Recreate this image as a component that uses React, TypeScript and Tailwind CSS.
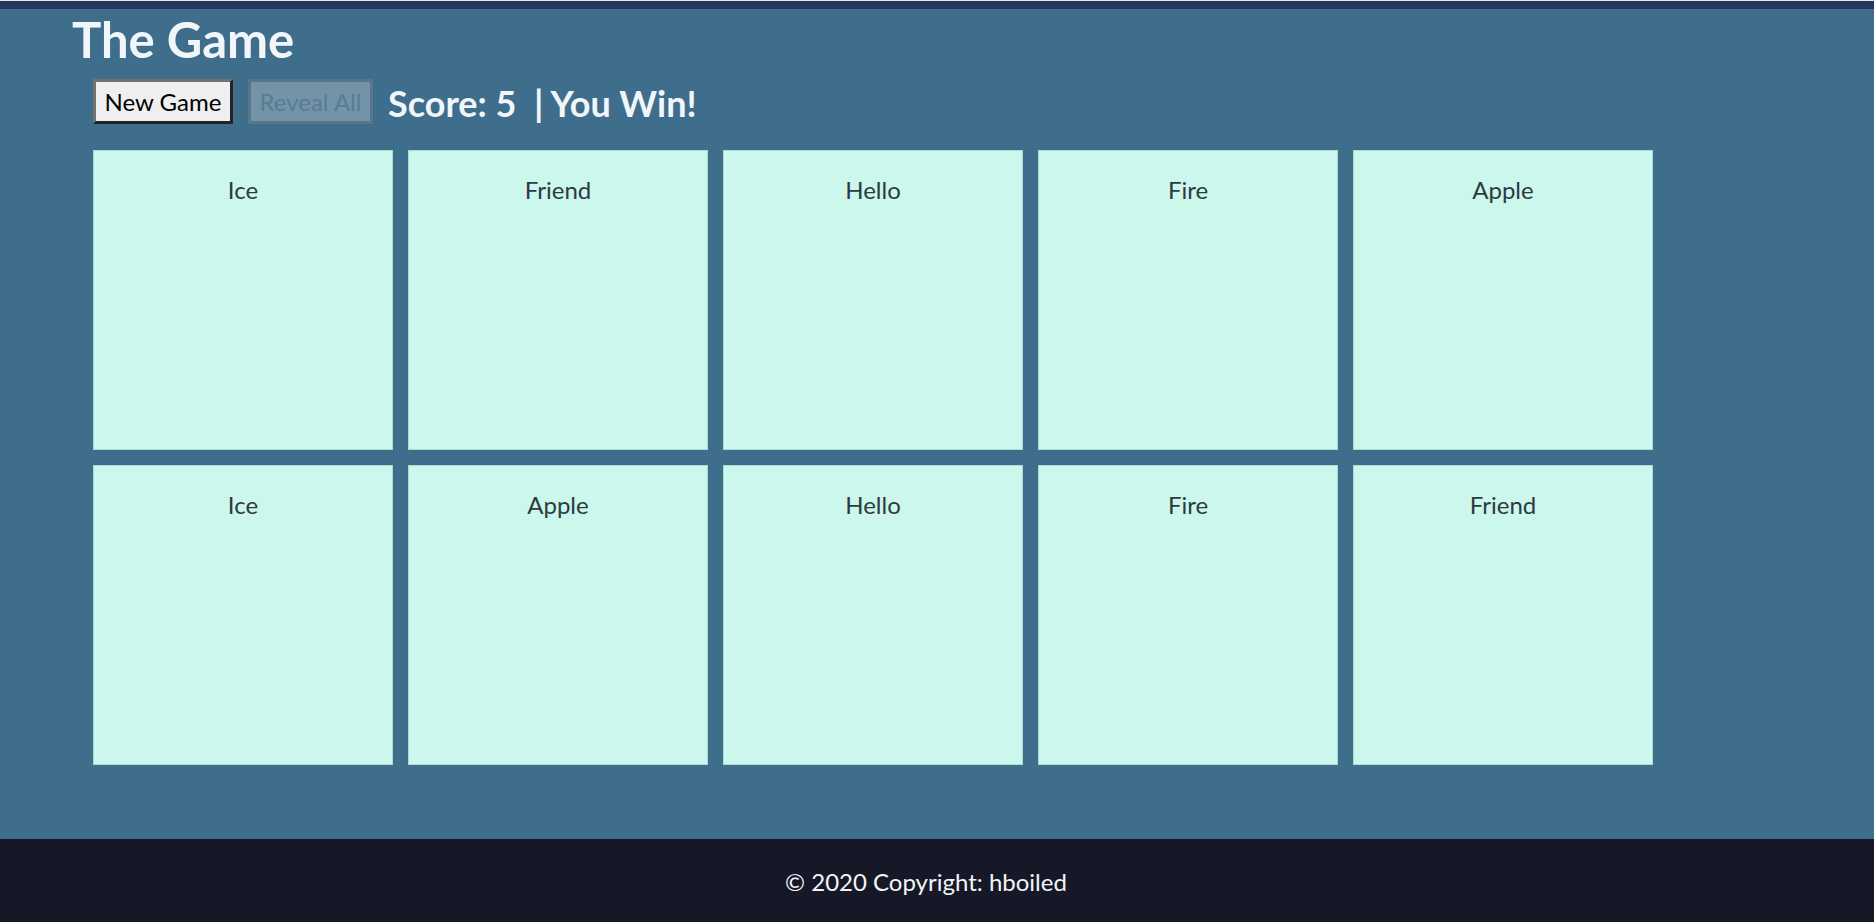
import React from 'react';

const cards = [
  ['Ice', 'Friend', 'Hello', 'Fire', 'Apple'],
  ['Ice', 'Apple', 'Hello', 'Fire', 'Friend'],
];

export default function App() {
  return (
    <div className="min-h-screen flex flex-col font-['Lato',sans-serif]">
      <div className="h-px bg-[#e6e6e6]" />
      <div className="h-2 bg-[#22375a]" />
      <main className="flex-1 bg-[#3f6d8c] pl-[72px] pt-[5px]">
        <h1 className="text-[49px] leading-[50px] font-bold text-[#f1f6fb]">The Game</h1>
        <div className="pl-[21px]">
          <div className="mt-[15px] flex items-center gap-[15px]">
            <button className="w-[140px] h-[45px] bg-[#efefef] border-[3px] border-t-[#727272] border-l-[#727272] border-r-[#242424] border-b-[#242424] text-[24px] leading-none text-black">
              New Game
            </button>
            <button
              disabled
              className="w-[125px] h-[45px] bg-[#7393a9] border-[3px] border-[#5a7588] text-[24px] leading-none text-[#5a7c91]"
            >
              Reveal All
            </button>
            <h2 className="pt-[3px] text-[36px] leading-none font-bold text-[#f1f6fb] whitespace-pre">
              Score: 5  | You Win!
            </h2>
          </div>
          <div className="mt-[26px] grid grid-cols-[repeat(5,300px)] gap-[15px]">
            {cards.flat().map((word, i) => (
              <div
                key={i}
                className="h-[300px] bg-[#ccf7ec] border border-[#a9dccf] pt-[27px] text-center text-[24px] leading-[24px] text-[#2c3b40]"
              >
                {word}
              </div>
            ))}
          </div>
        </div>
      </main>
      <footer className="h-[83px] bg-[#161827] flex items-center justify-center pr-[22px]">
        <p className="pt-[2px] text-[24px] leading-none text-[#f2f4f8]">© 2020 Copyright: hboiled</p>
      </footer>
    </div>
  );
}
